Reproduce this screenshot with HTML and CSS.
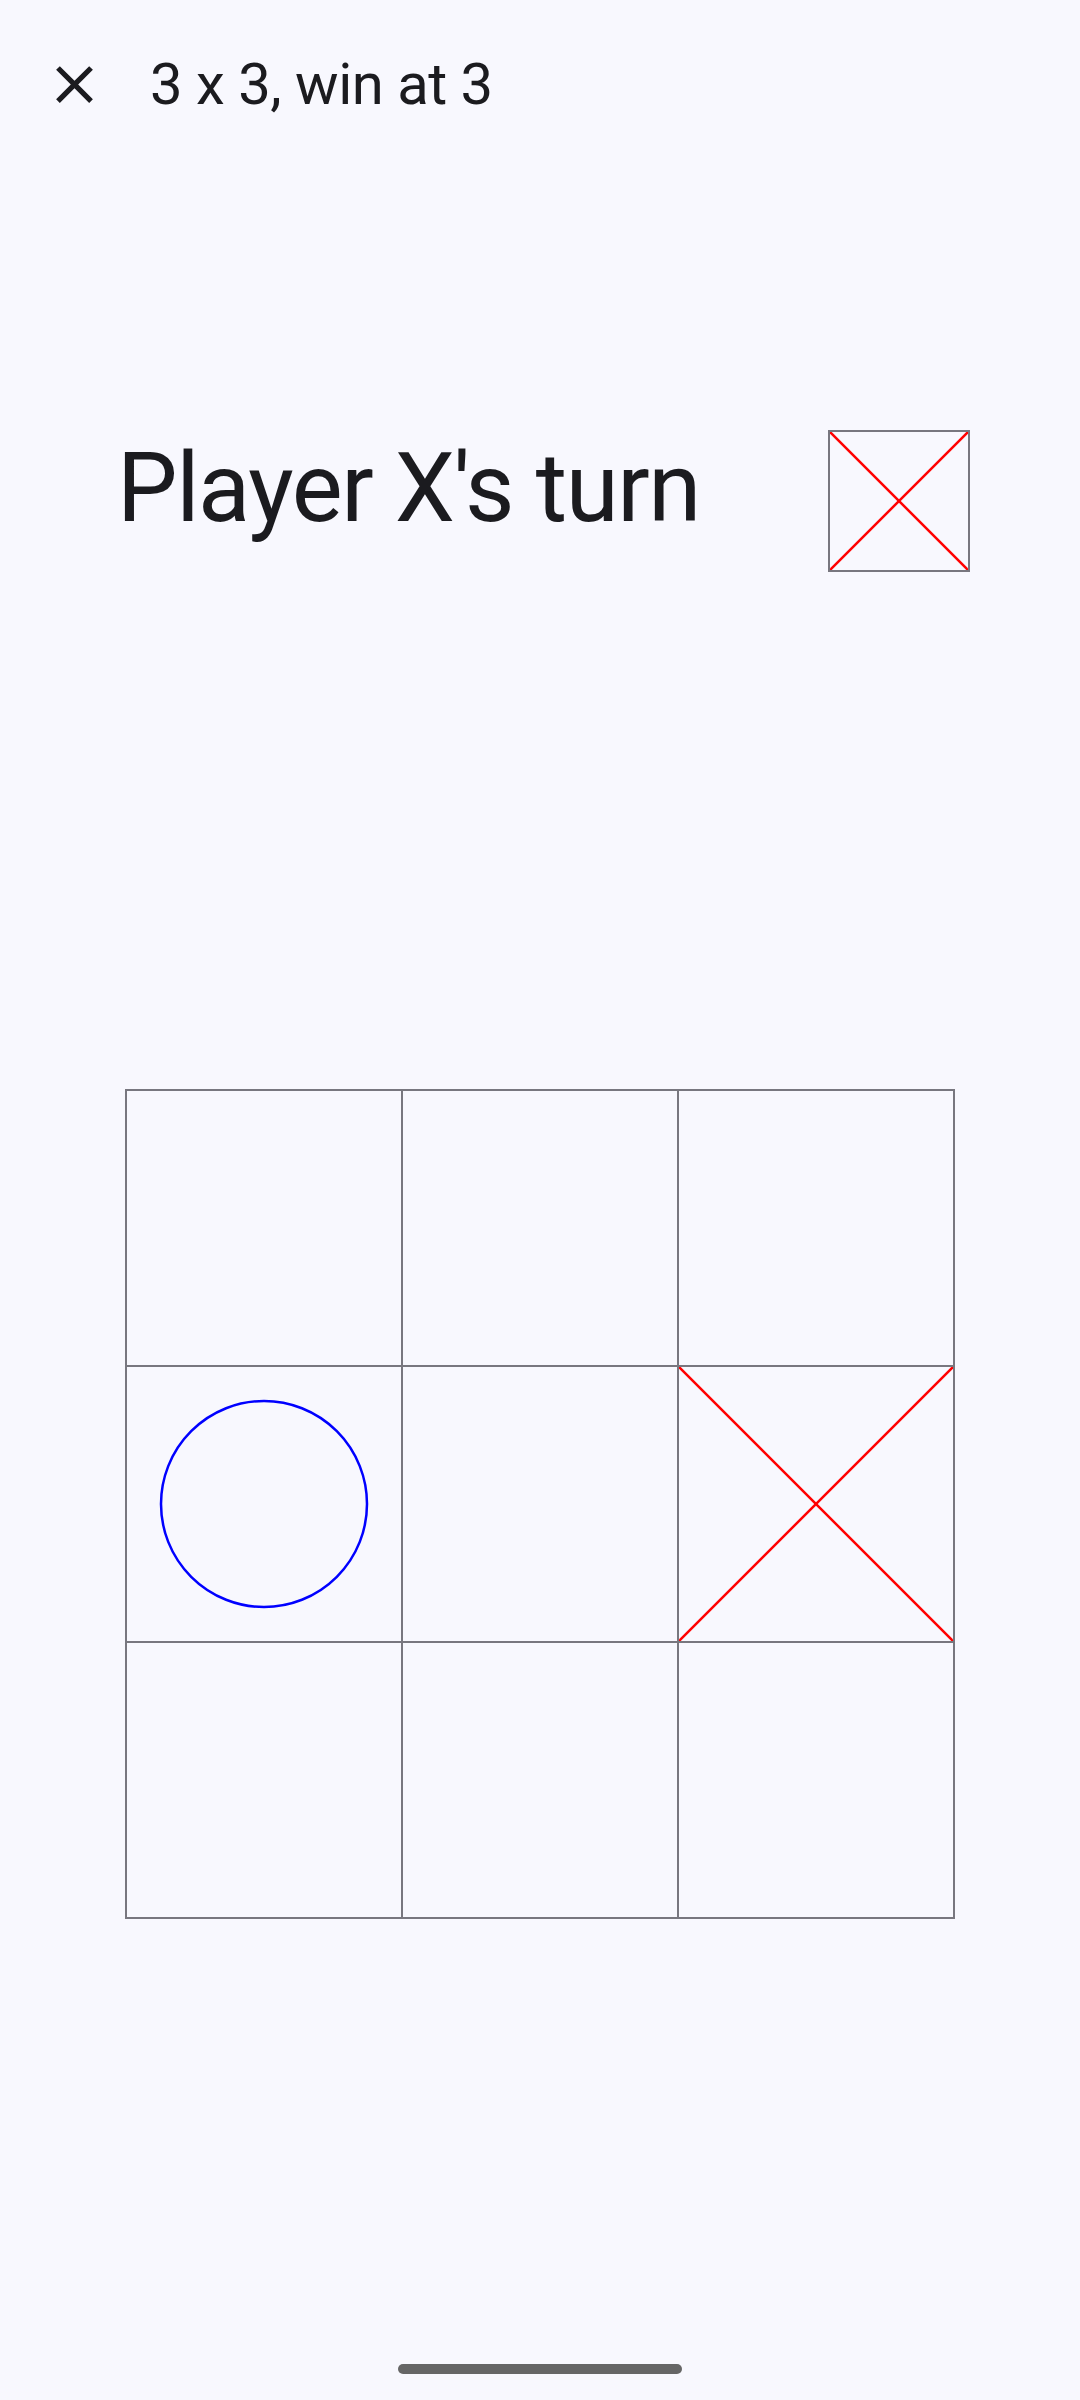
FILE: index.html
```html
<!DOCTYPE html>
<html lang="en">
<head>
  <meta charset="UTF-8">
  <title>Tic Tac Toe</title>
  <link rel="stylesheet" href="styles.css">
</head>
<body>

  <header class="topbar">
    <button class="close-btn" aria-label="Close">
      <svg viewBox="0 0 24 24" width="63" height="63">
        <path d="M19 6.41L17.59 5 12 10.59 6.41 5 5 6.41 10.59 12 5 17.59 6.41 19 12 13.41 17.59 19 19 17.59 13.41 12z" fill="#1b1b1f"/>
      </svg>
    </button>
    <span class="game-title">3 x 3, win at 3</span>
  </header>

  <div class="turn-row">
    <h1 class="turn-text">Player X's turn</h1>
    <div class="turn-mark">
      <svg viewBox="0 0 100 100" preserveAspectRatio="none">
        <line x1="0" y1="0" x2="100" y2="100" class="x-line"/>
        <line x1="100" y1="0" x2="0" y2="100" class="x-line"/>
      </svg>
    </div>
  </div>

  <!-- tablero -->
  <div class="board">
    <div class="cell"></div>
    <div class="cell"></div>
    <div class="cell"></div>
    <div class="cell">
      <svg viewBox="0 0 274 274">
        <circle cx="137" cy="137" r="103" class="o-ring"/>
      </svg>
    </div>
    <div class="cell"></div>
    <div class="cell">
      <svg viewBox="0 0 100 100" preserveAspectRatio="none">
        <line x1="0" y1="0" x2="100" y2="100" class="x-line"/>
        <line x1="100" y1="0" x2="0" y2="100" class="x-line"/>
      </svg>
    </div>
    <div class="cell"></div>
    <div class="cell"></div>
    <div class="cell"></div>
  </div>

  <div class="nav-handle"></div>

</body>
</html>
```

FILE: styles.css
```css
body {
  margin: 0;
  background: #f8f8fe;
  font-family: Roboto, "Noto Sans", sans-serif;
  color: #1b1b1f;
}

.topbar {
  display: flex;
  align-items: center;
  height: 168px;
  padding-left: 43px;
}
.close-btn {
  width: 63px;
  height: 63px;
  padding: 0;
  border: none;
  background: none;
  display: flex;
}
.game-title {
  margin-left: 44px;
  font-size: 58px;
  letter-spacing: -0.5px;
  line-height: 1;
}

.turn-row {
  display: flex;
  justify-content: space-between;
  align-items: flex-start;
  margin-top: 262px;
  padding: 0 110px 0 117px;
}
.turn-text {
  margin: 10px 0 0 0;
  font-size: 96px;
  font-weight: 400;
  letter-spacing: -1.4px;
  line-height: 1;
}
.turn-mark {
  width: 138px;
  height: 138px;
  border: 2px solid #78777f;
  display: flex;
}
.turn-mark svg, .cell svg {
  width: 100%;
  height: 100%;
  display: block;
}

.x-line {
  stroke: #ff0000;
  stroke-width: 2.5;
  vector-effect: non-scaling-stroke;
}
.o-ring {
  fill: none;
  stroke: #0000ff;
  stroke-width: 2.5;
}

.board {
  display: grid;
  grid-template-columns: repeat(3, 276px);
  grid-template-rows: repeat(3, 276px);
  width: 828px;
  margin: 517px auto 0;
  border-left: 2px solid #78777f;
  border-top: 2px solid #78777f;
}
.cell {
  border-right: 2px solid #78777f;
  border-bottom: 2px solid #78777f;
}

.nav-handle {
  width: 284px;
  height: 10px;
  margin: 445px auto 0;
  border-radius: 5px;
  background: #666666;
}
```
